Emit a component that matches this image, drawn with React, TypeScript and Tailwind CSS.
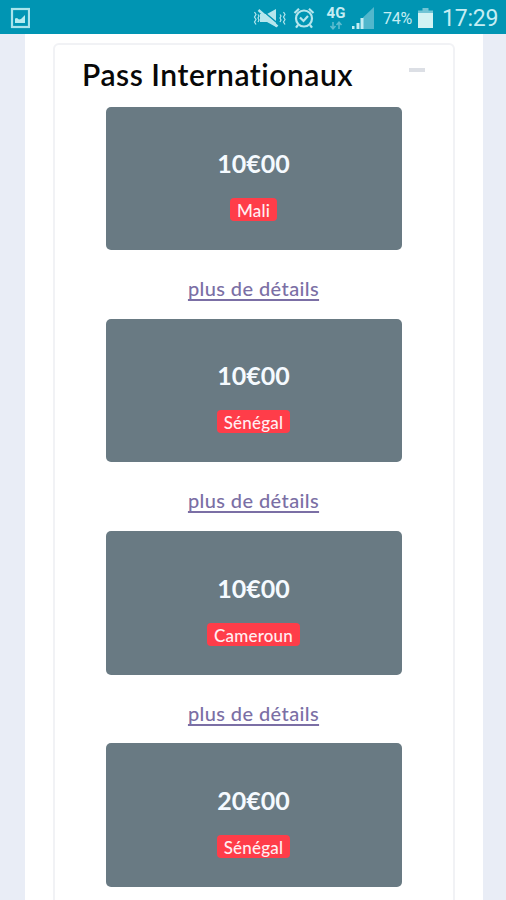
import React from "react";

const passes = [
  { price: "10€00", country: "Mali" },
  { price: "10€00", country: "Sénégal" },
  { price: "10€00", country: "Cameroun" },
  { price: "20€00", country: "Sénégal" },
];

function PictureIcon() {
  return (
    <svg width="20" height="22" viewBox="0 0 20 22" className="ml-[10px] -mt-[1px]">
      <rect x="2" y="2" width="17" height="18" fill="none" stroke="#a9e4ec" strokeWidth="2.200" />
      <path d="M5 16v-4.500l2-.5 2 1.500 2-.5 4-4v8z" fill="#b5ecf0" />
    </svg>
  );
}

function MuteIcon() {
  return (
    <svg width="33" height="20" viewBox="0 0 33 20" fill="none" stroke="#b5e6ed" strokeWidth="1.6">
      <path d="M7 6h7l9-5v18l-9-5H7z" fill="#b5e6ed" stroke="none" />
      <path d="M7.500 1l18 15" stroke="#0095b3" strokeWidth="1.500" />
      <path d="M5.500 2l19 16.500" strokeWidth="2.400" />
      <path d="M1.500 4l1.500 2.500-1.500 2.500 1.500 2.500-1.500 2.500 1.500 2.500M5 6.500l1 1.500-1 2 1 2-1 2M27 6.500l1 1.500-1 2 1 2-1 2M30.500 4l1.500 2.500-1.500 2.500 1.500 2.500-1.500 2.500 1.500 2.500" strokeWidth="1.200" />
    </svg>
  );
}

function AlarmIcon() {
  return (
    <svg width="22" height="22" viewBox="0 0 22 22" fill="none" stroke="#b5e6ed" strokeWidth="2.200">
      <circle cx="11" cy="11.500" r="8" />
      <path d="M1.500 6L6 1.800M20.500 6L16 1.800M5 18l-2 2.700M17 18l2 2.700" />
      <path d="M7 10.500l3.500 3.500 4.500-5" />
    </svg>
  );
}

function StatusBar() {
  return (
    <header className="flex h-[34px] shrink-0 items-center bg-[#0095b3] pt-[2px] font-[Roboto,sans-serif] text-[#c5edf3]">
      <PictureIcon />
      <div className="ml-[223px] flex w-[33px]"><MuteIcon /></div>
      <div className="ml-[7px] w-[22px]"><AlarmIcon /></div>
      <div className="-mt-[1px] ml-[11px] flex w-[20px] flex-col items-center">
        <span className="text-[15px] leading-[15px] font-bold">4G</span>
        <svg width="16" height="9" viewBox="0 0 16 9" fill="none" stroke="#5fbdd0" strokeWidth="1.500">
          <path d="M5 1v6.500M2.500 5L5 7.800 7.500 5M11 8V1.500M8.500 4L11 1.200 13.500 4" />
        </svg>
      </div>
      <svg width="24" height="24" viewBox="0 0 24 24" className="ml-[5px]">
        <path d="M12 11.500L23 1v22H12z" fill="#52b7cc" />
        <path d="M1 20h2.500v3H1zM5.500 17h3v6h-3zM9.500 12h3v11h-3z" fill="#c5edf3" />
      </svg>
      <span className="mt-[1px] ml-[8px] w-[30px] text-[16px] leading-[20px] whitespace-nowrap tracking-[-0.3px]">74%</span>
      <svg width="15" height="20" viewBox="0 0 15 20" className="ml-[5px]">
        <path d="M4.500 0h6v2.500H15V6H0V2.500h4.500z" fill="#72c5d5" />
        <path d="M0 5h15v15H0z" fill="#d2f3f3" />
      </svg>
      <span className="mt-[2px] ml-[9px] text-[23px] leading-[28px] tracking-[-0.2px] whitespace-nowrap">17:29</span>
    </header>
  );
}

function PassItem({ price, country, showDetails }: { price: string; country: string; showDetails: boolean }) {
  return (
    <li className="flex h-[212.33px] shrink-0 flex-col items-center">
      <div className="flex h-[143.5px] w-[296px] shrink-0 flex-col items-center rounded-[5px] bg-[#697a83] pt-[41.500px]">
        <strong className="text-[25px] leading-[30px] font-bold text-[#f5faff]">{price}</strong>
        <span className="mt-[20px] h-[23px] rounded-[4px] bg-[#ff3d49] px-[6.500px] text-[17px] leading-[26px] font-medium tracking-[0.2px] text-[#ffeff2]">
          {country}
        </span>
      </div>
      {showDetails && (
        <a
          href="#"
          className="mt-[26px] text-[20px] leading-[24px] font-medium tracking-[0.4px] text-[#7b6fa5] underline decoration-[1.5px] underline-offset-[3px] [text-decoration-skip-ink:none]"
        >
          plus de détails
        </a>
      )}
    </li>
  );
}

export default function App() {
  return (
    <div className="flex h-[900px] w-[506px] flex-col overflow-hidden bg-[#e9edf6] font-[Lato,sans-serif]">
      <StatusBar />
      <main className="ml-[25px] flex min-h-0 w-[457.500px] flex-1 flex-col bg-white pt-[9px] pl-[27.500px]">
        <section className="flex min-h-0 w-[402px] flex-1 flex-col rounded-t-[6px] border-2 border-b-0 border-[#f1f2f5]">
          <div className="flex h-[61.500px] shrink-0 items-start justify-between pt-[10px] pr-[27.500px] pl-[27.500px]">
            <h1 className="text-[30px] leading-[38px] font-semibold tracking-[0.55px] whitespace-nowrap text-[#080808]">Pass Internationaux</h1>
            <span className="mt-[12.500px] h-[4px] w-[16px] bg-[#dcdfe5]" />
          </div>
          <ul className="flex min-h-0 flex-1 flex-col items-center overflow-hidden">
            {passes.map((pass, index) => (
              <PassItem
                key={index}
                price={pass.price}
                country={pass.country}
                showDetails={index < passes.length - 1}
              />
            ))}
          </ul>
        </section>
      </main>
    </div>
  );
}
